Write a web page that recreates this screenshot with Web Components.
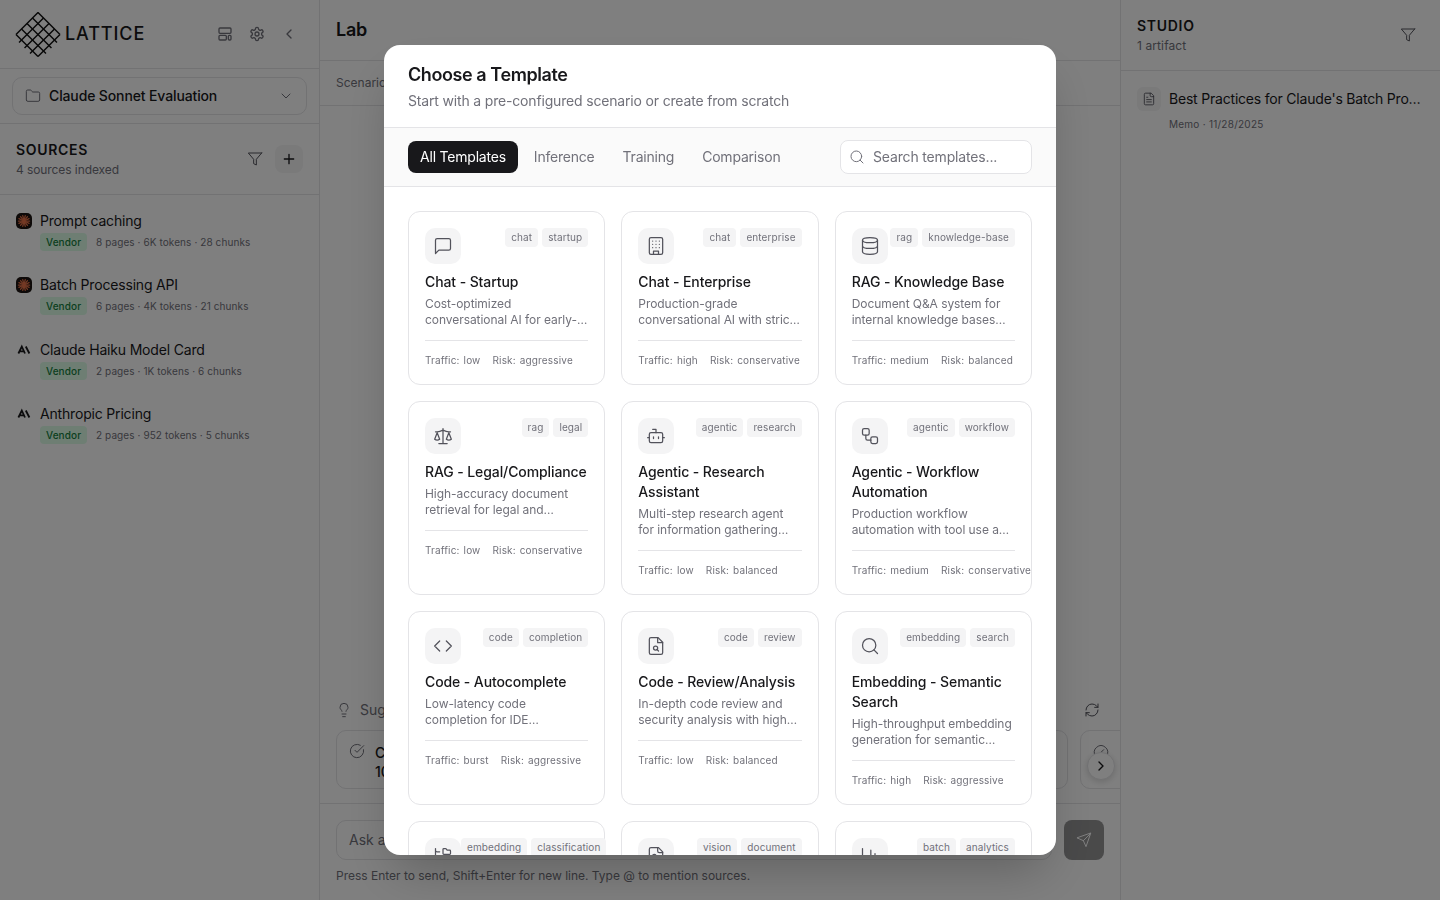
<!DOCTYPE html>
<html lang="en">
<head>
<meta charset="utf-8">
<title>Lattice</title>
<style>
html,body{margin:0;height:100%;background:#fff;color:#18181b;font-family:Inter,"Liberation Sans",sans-serif;overflow:hidden}
</style>
</head>
<body>
<app-shell></app-shell>
<script>
const P = {
 message:'<path d="M21 15a2 2 0 0 1-2 2H7l-4 4V5a2 2 0 0 1 2-2h14a2 2 0 0 1 2 2z"/>',
 building:'<rect x="4" y="2" width="16" height="20" rx="2"/><path d="M9 22v-4h6v4M8 6h.01M16 6h.01M12 6h.01M12 10h.01M12 14h.01M16 10h.01M16 14h.01M8 10h.01M8 14h.01"/>',
 database:'<ellipse cx="12" cy="5" rx="9" ry="3"/><path d="M3 5V19A9 3 0 0 0 21 19V5"/><path d="M3 12A9 3 0 0 0 21 12"/>',
 scale:'<path d="m16 16 3-8 3 8c-.87.65-1.92 1-3 1s-2.13-.35-3-1Z"/><path d="m2 16 3-8 3 8c-.87.65-1.92 1-3 1s-2.13-.35-3-1Z"/><path d="M7 21h10M12 3v18M3 7h2c2 0 5-1 7-2 2 1 5 2 7 2h2"/>',
 bot:'<path d="M12 8V4H8"/><rect width="16" height="12" x="4" y="8" rx="2"/><path d="M2 14h2M20 14h2M15 13v2M9 13v2"/>',
 workflow:'<rect width="8" height="8" x="3" y="3" rx="2"/><path d="M7 11v4a2 2 0 0 0 2 2h4"/><rect width="8" height="8" x="13" y="13" rx="2"/>',
 code:'<path d="m16 18 6-6-6-6M8 6l-6 6 6 6"/>',
 filesearch:'<path d="M14.5 2H6a2 2 0 0 0-2 2v16a2 2 0 0 0 2 2h12a2 2 0 0 0 2-2V7.5L14.5 2z"/><path d="M14 2v6h6"/><circle cx="11.5" cy="14.5" r="2.5"/><path d="M13.25 16.25 15 18"/>',
 search:'<circle cx="11" cy="11" r="8"/><path d="m21 21-4.3-4.3"/>',
 foldertree:'<path d="M20 10a1 1 0 0 0 1-1V6a1 1 0 0 0-1-1h-2.5a1 1 0 0 1-.8-.4l-.9-1.2A1 1 0 0 0 15 3h-2a1 1 0 0 0-1 1v5a1 1 0 0 0 1 1Z"/><path d="M20 21a1 1 0 0 0 1-1v-3a1 1 0 0 0-1-1h-2.9a1 1 0 0 1-.88-.55l-.42-.85a1 1 0 0 0-.92-.6H13a1 1 0 0 0-1 1v5a1 1 0 0 0 1 1Z"/><path d="M3 5a2 2 0 0 0 2 2h3M3 3v13a2 2 0 0 0 2 2h3"/>',
 fileimage:'<path d="M15 2H6a2 2 0 0 0-2 2v16a2 2 0 0 0 2 2h12a2 2 0 0 0 2-2V7Z"/><path d="M14 2v4a2 2 0 0 0 2 2h4"/><circle cx="10" cy="12" r="2"/><path d="m20 17-1.296-1.296a2.41 2.41 0 0 0-3.408 0L9 22"/>',
 barchart:'<path d="M3 3v18h18M18 17V9M13 17V5M8 17v-3"/>',
 bulb:'<path d="M15 14c.2-1 .7-1.7 1.5-2.5 1-.9 1.5-2.2 1.5-3.5A6 6 0 0 0 6 8c0 1 .2 2.2 1.5 3.5.7.7 1.3 1.5 1.5 2.5"/><path d="M9 18h6M10 22h4"/>',
 refresh:'<path d="M3 12a9 9 0 0 1 9-9 9.75 9.75 0 0 1 6.74 2.74L21 8"/><path d="M21 3v5h-5"/><path d="M21 12a9 9 0 0 1-9 9 9.75 9.75 0 0 1-6.74-2.74L3 16"/><path d="M8 16H3v5"/>',
 check:'<path d="M21.801 10A10 10 0 1 1 17 3.335"/><path d="m9 11 3 3L22 4"/>',
 gauge:'<path d="m12 14 4-4"/><path d="M3.34 19a10 10 0 1 1 17.32 0"/>',
 send:'<path d="m22 2-7 20-4-9-9-4Z"/><path d="M22 2 11 13"/>',
 filter:'<path d="M22 3H2l8 9.46V19l4 2v-8.54L22 3z"/>',
 folder:'<path d="M20 20a2 2 0 0 0 2-2V8a2 2 0 0 0-2-2h-7.9a2 2 0 0 1-1.69-.9L9.6 3.9A2 2 0 0 0 7.93 3H4a2 2 0 0 0-2 2v13a2 2 0 0 0 2 2Z"/>',
 settings:'<path d="M12.22 2h-.44a2 2 0 0 0-2 2v.18a2 2 0 0 1-1 1.73l-.43.25a2 2 0 0 1-2 0l-.15-.08a2 2 0 0 0-2.73.73l-.22.38a2 2 0 0 0 .73 2.73l.15.1a2 2 0 0 1 1 1.72v.51a2 2 0 0 1-1 1.74l-.15.09a2 2 0 0 0-.73 2.73l.22.38a2 2 0 0 0 2.73.73l.15-.08a2 2 0 0 1 2 0l.43.25a2 2 0 0 1 1 1.73V20a2 2 0 0 0 2 2h.44a2 2 0 0 0 2-2v-.18a2 2 0 0 1 1-1.73l.43-.25a2 2 0 0 1 2 0l.15.08a2 2 0 0 0 2.73-.73l.22-.39a2 2 0 0 0-.73-2.73l-.15-.08a2 2 0 0 1-1-1.74v-.5a2 2 0 0 1 1-1.74l.15-.09a2 2 0 0 0 .73-2.73l-.22-.38a2 2 0 0 0-2.73-.73l-.15.08a2 2 0 0 1-2 0l-.43-.25a2 2 0 0 1-1-1.73V4a2 2 0 0 0-2-2z"/><circle cx="12" cy="12" r="3"/>',
 filetext:'<path d="M15 2H6a2 2 0 0 0-2 2v16a2 2 0 0 0 2 2h12a2 2 0 0 0 2-2V7Z"/><path d="M14 2v4a2 2 0 0 0 2 2h4M10 9H8M16 13H8M16 17H8"/>',
 layout:'<rect x="3" y="3" width="18" height="8" rx="1.5"/><rect x="3" y="14" width="11" height="7" rx="1.5"/><rect x="17" y="14" width="4" height="7" rx="1.5"/>',
 left:'<path d="m15 18-6-6 6-6"/>',
 right:'<path d="m9 18 6-6-6-6"/>',
 down:'<path d="m6 9 6 6 6-6"/>',
 plus:'<path d="M5 12h14M12 5v14"/>'
};
const icon=(n,s=16,w=2,c='currentColor')=>`<svg xmlns="http://www.w3.org/2000/svg" width="${s}" height="${s}" viewBox="0 0 24 24" fill="none" stroke="${c}" stroke-width="${w}" stroke-linecap="round" stroke-linejoin="round" style="display:block;flex:none">${P[n]}</svg>`;

class LatticeLogo extends HTMLElement{
 constructor(){super();
  let lines='<path d="M0 0H31.11M0 0V31.11"/>';
  [7.78,15.56,23.33].forEach(v=>{lines+=`<path d="M${v} 0V34.6M0 ${v}H34.6"/>`});
  lines+='<path d="M31.11 0V31.11M0 31.11H31.11"/>';
  this.attachShadow({mode:'open'}).innerHTML=`<style>
  :host{display:flex;align-items:center;gap:5px}
  span{font:500 18px/22px Inter,sans-serif;letter-spacing:.05em;color:#18181b}
  svg{overflow:visible}
  </style>
  <svg width="44" height="44" viewBox="0 0 44 44" fill="none" stroke="#111" stroke-width="1.45" stroke-linecap="butt"><g transform="translate(22 .6) rotate(45)">${lines}</g></svg>
  <span>LATTICE</span>`;
 }
}
class SourceItem extends HTMLElement{
 constructor(){super();
  const k=this.getAttribute('logo');
  let rays='';
  for(let i=0;i<14;i++){const a=i*Math.PI/7;rays+=`<path d="M8 8L${(8+5.6*Math.cos(a)).toFixed(2)} ${(8+5.6*Math.sin(a)).toFixed(2)}"/>`}
  const logo=k==='burst'
   ?`<svg width="16" height="16" viewBox="0 0 16 16"><rect width="16" height="16" rx="5" fill="#1c1512"/><g stroke="#e8734a" stroke-width="1.25" stroke-linecap="round">${rays}</g></svg>`
   :`<svg width="16" height="16" viewBox="0 0 16 16" fill="none" stroke="#18181b" stroke-width="1.8"><path d="M2.4 11.5 5.8 4.5 9 11.5M3.6 9.4H8"/><path d="M9.8 4.5 13.4 11.5"/></svg>`;
  this.attachShadow({mode:'open'}).innerHTML=`<style>
  :host{display:grid;grid-template-columns:16px 1fr;column-gap:8px;height:64.33px;box-sizing:border-box;padding:0 16px;align-content:start}
  .l{height:20px;display:flex;align-items:center}
  .t{font:400 14px/20px Inter,sans-serif;letter-spacing:-.18px;color:#18181b;white-space:nowrap}
  .m{grid-column:2;display:flex;align-items:center;gap:9px;margin-top:2px;height:18px}
  .b{font:500 10px/18px Inter,sans-serif;letter-spacing:.1px;color:#15803d;background:#dcfce7;border-radius:4px;padding:0 6px;width:35px;box-sizing:content-box;text-align:center}
  .x{font:400 10px/18px Inter,sans-serif;letter-spacing:.09px;color:#71717a;white-space:nowrap}
  </style><div class="l">${logo}</div><div class="t"><slot></slot></div>
  <div class="m"><span class="b">Vendor</span><span class="x">${this.getAttribute('meta')}</span></div>`;
 }
}
class AppSidebar extends HTMLElement{
 constructor(){super();
  this.attachShadow({mode:'open'}).innerHTML=`<style>
  :host{display:flex;flex-direction:column;width:320px;flex:none;box-sizing:border-box;border-right:1px solid #e4e4e7;height:100vh;background:#fff}
  .top{height:69px;box-sizing:border-box;border-bottom:1px solid #e4e4e7;display:flex;align-items:center;padding:0 16px 0 16px;justify-content:space-between}
  .tools{display:flex;align-items:center;gap:16px;color:#71717a;padding-right:6px;margin-top:-1px}
  .proj{height:55px;box-sizing:border-box;border-bottom:1px solid #e4e4e7;padding:8px 12px}
  .sel{height:38px;box-sizing:border-box;border:1px solid #e4e4e7;border-radius:10px;display:flex;align-items:center;padding:0 12px;gap:8px;font:500 14px/20px Inter,sans-serif;letter-spacing:-.13px;color:#18181b}
  .sel span{flex:1}.sel svg{color:#71717a}
  .src{height:71px;box-sizing:border-box;border-bottom:1px solid #e4e4e7;display:flex;align-items:center;justify-content:space-between;padding:0 16px}
  h2{margin:0;font:600 14px/20px Inter,sans-serif;letter-spacing:.05em;color:#18181b}
  p{margin:0;font:400 12px/16px Inter,sans-serif;color:#71717a;letter-spacing:-.08px;margin-top:2px}
  .acts{display:flex;align-items:center;gap:12px;color:#52525b}
  .add{width:28px;height:28px;border-radius:8px;background:#f4f4f5;display:grid;place-items:center;color:#18181b}
  .list{padding-top:16px}
  </style>
  <div class="top"><lattice-logo></lattice-logo><div class="tools">${icon('layout',16)}${icon('settings',16)}${icon('left',16)}</div></div>
  <div class="proj"><div class="sel">${icon('folder',16,1.5)}<span>Claude Sonnet Evaluation</span>${icon('down',16,1.5)}</div></div>
  <div class="src"><div><h2>SOURCES</h2><p>4 sources indexed</p></div><div class="acts">${icon('filter',16,1.5)}<div class="add">${icon('plus',16)}</div></div></div>
  <div class="list"><slot></slot></div>`;
 }
}
class LabPanel extends HTMLElement{
 constructor(){super();
  this.attachShadow({mode:'open'}).innerHTML=`<style>
  :host{display:flex;flex-direction:column;flex:1;min-width:0;height:100vh;box-sizing:border-box;border-right:1px solid #e4e4e7;overflow:hidden;position:relative}
  .h{height:61px;box-sizing:border-box;border-bottom:1px solid #e4e4e7;display:flex;align-items:center;padding:0 16px;font:600 18px/28px Inter,sans-serif;letter-spacing:-.3px;color:#18181b;flex:none}
  .t{height:45px;box-sizing:border-box;border-bottom:1px solid #e4e4e7;display:flex;align-items:center;padding:0 16px;font:400 12px/16px Inter,sans-serif;color:#71717a;flex:none}
  .main{flex:1}
  .sug{height:104px;box-sizing:border-box;border-bottom:1px solid #e4e4e7;padding:0 0 0 16px;flex:none}
  .sh{height:20px;display:flex;align-items:center;gap:8px;padding-right:20px;font:400 14px/20px Inter,sans-serif;color:#71717a}
  .sh span{flex:1}
  .row{display:flex;gap:12px;margin-top:10px}
  .c{flex:none;height:59px;box-sizing:border-box;border:1px solid #e4e4e7;border-radius:10px;padding:12px;display:flex;gap:10px;font:500 14px/19px Inter,sans-serif;color:#18181b}
  .c svg{color:#71717a}
  .more{position:absolute;left:767px;top:752px;width:28px;height:28px;border-radius:50%;background:#fff;border:1px solid #e4e4e7;box-sizing:border-box;display:grid;place-items:center;box-shadow:0 2px 6px rgba(0,0,0,.15);color:#18181b}
  .inp{padding:16px 16px 0;flex:none;height:96px;box-sizing:border-box}
  .ir{display:flex;gap:12px}
  .f{flex:1;height:40px;box-sizing:border-box;border:1px solid #e4e4e7;border-radius:10px;padding:0 12px;display:flex;align-items:center;font:400 14px/20px Inter,sans-serif;color:#71717a}
  .go{width:40px;height:40px;border-radius:8px;background:#949495;display:grid;place-items:center;color:#fff}
  .hint{margin-top:8px;font:400 12px/16px Inter,sans-serif;letter-spacing:-.01px;color:#71717a}
  </style>
  <div class="h">Lab</div><div class="t">Scenarios</div><div class="main"></div>
  <div class="sug"><div class="sh">${icon('bulb',16,1.5)}<span>Suggestions</span>${icon('refresh',16,1.5,'#52525b')}</div>
   <div class="row"><div class="c" style="width:364px">${icon('check',16,1.5)}<div>Cost<br>10x</div></div><div class="c" style="width:356px"></div><div class="c" style="width:200px">${icon('gauge',16,1.5)}</div></div></div>
  <div class="more">${icon('right',16,2)}</div>
  <div class="inp"><div class="ir"><div class="f">Ask a question</div><div class="go">${icon('send',16,1.5)}</div></div><div class="hint">Press Enter to send, Shift+Enter for new line. Type @ to mention sources.</div></div>`;
 }
}
class StudioPanel extends HTMLElement{
 constructor(){super();
  this.attachShadow({mode:'open'}).innerHTML=`<style>
  :host{display:flex;flex-direction:column;width:319px;flex:none;height:100vh}
  .h{height:71px;box-sizing:border-box;border-bottom:1px solid #e4e4e7;display:flex;align-items:center;justify-content:space-between;padding:0 24px 0 16px;flex:none}
  h2{margin:0;font:600 14px/20px Inter,sans-serif;letter-spacing:.05em;color:#18181b}
  p{margin:2px 0 0;font:400 12px/16px Inter,sans-serif;letter-spacing:.1px;color:#71717a}
  .h svg{color:#52525b}
  .a{display:grid;grid-template-columns:24px 1fr;column-gap:8px;padding:16px 17px 0 16px}
  .i{width:24px;height:24px;border-radius:6px;background:#f4f4f5;display:grid;place-items:center;color:#52525b}
  .t{font:400 14px/24px Inter,sans-serif;letter-spacing:-.2px;color:#18181b;white-space:nowrap;overflow:hidden;text-overflow:ellipsis}
  .m{grid-column:2;margin-top:5px;font:400 10px/16px Inter,sans-serif;letter-spacing:.25px;color:#71717a}
  </style>
  <div class="h"><div><h2>STUDIO</h2><p>1 artifact</p></div>${icon('filter',16,1.5)}</div>
  <div class="a"><div class="i">${icon('filetext',14,1.5)}</div><div class="t">Best Practices for Claude's Batch Processing</div><div class="m">Memo · 11/28/2025</div></div>`;
 }
}
class TemplateCard extends HTMLElement{
 constructor(){super();
  const tags=(this.getAttribute('tags')||'').split(',').map(t=>`<span class="tag">${t}</span>`).join('');
  const tr=this.getAttribute('traffic');
  const foot=tr?`<div class="foot"><span><i>Traffic:</i> ${tr}</span><span><i>Risk:</i> ${this.getAttribute('risk')}</span></div>`:'';
  this.attachShadow({mode:'open'}).innerHTML=`<style>
  :host{display:block;box-sizing:border-box;border:1px solid #e4e4e7;border-radius:12px;padding:16px;background:#fff;min-width:0}
  .top{display:flex;justify-content:space-between;align-items:flex-start;margin-bottom:8px}
  .ic{width:36px;height:36px;border-radius:10px;background:#f4f4f5;display:grid;place-items:center;color:#52525b;flex:none}
  .tags{display:flex;gap:4px;flex:none}
  .tag{font:400 10px/19px Inter,sans-serif;letter-spacing:.1px;color:#71717a;background:#f4f4f5;border-radius:4px;padding:0 6px;white-space:nowrap}
  .ti{font:500 14px/20px Inter,sans-serif;letter-spacing:-.1px;color:#18181b}
  .de{margin-top:4px;font:400 12px/16px Inter,sans-serif;letter-spacing:-.06px;color:#71717a;display:-webkit-box;-webkit-line-clamp:2;-webkit-box-orient:vertical;overflow:hidden}
  .foot{margin-top:12px;border-top:1px solid #e4e4e7;padding-top:12px;display:flex;gap:12px;font:400 10px/15px Inter,sans-serif;letter-spacing:.16px;color:#71717a;white-space:nowrap}
  i{font-style:normal;color:#71717a;margin-right:1px}
  </style>
  <div class="top"><div class="ic">${icon(this.getAttribute('icon'),20,1.5)}</div><div class="tags">${tags}</div></div>
  ${tr?'<div class="ti"><slot name="title"></slot></div><div class="de"><slot></slot></div>':''}${foot}`;
 }
}
class TemplateModal extends HTMLElement{
 constructor(){super();
  this.attachShadow({mode:'open'}).innerHTML=`<style>
  :host{position:fixed;inset:0;background:rgba(0,0,0,.5);display:flex;align-items:center;justify-content:center;z-index:10}
  .m{width:672px;height:90vh;background:#fff;border-radius:16px;display:flex;flex-direction:column;overflow:hidden;box-shadow:0 25px 50px -12px rgba(0,0,0,.25)}
  .h{padding:16px 24px;border-bottom:1px solid #e4e4e7;flex:none}
  h1{margin:0;font:600 18px/28px Inter,sans-serif;letter-spacing:-.42px;color:#18181b}
  p{margin:2px 0 0;font:400 14px/20px Inter,sans-serif;letter-spacing:-.17px;color:#71717a}
  .bar{height:59px;box-sizing:border-box;border-bottom:1px solid #e4e4e7;background:#fafafa;display:flex;align-items:center;padding:0 24px;gap:4px;flex:none}
  .tab{height:32px;padding:0 12px;box-sizing:border-box;border-radius:8px;font:400 14px/32px Inter,sans-serif;letter-spacing:-.21px;color:#71717a}
  .tab.on{background:#18181b;color:#fff}
  .s{margin-left:auto;width:192px;height:34px;box-sizing:border-box;border:1px solid #e4e4e7;border-radius:8px;background:#fff;display:flex;align-items:center;gap:8px;padding:0 8px;font:400 14px/20px Inter,sans-serif;letter-spacing:-.16px;color:#71717a}
  .b{flex:1;min-height:0;overflow:hidden;padding:24px;box-sizing:border-box}
  .g{display:grid;grid-template-columns:repeat(3,1fr);gap:16px}
  </style>
  <div class="m"><div class="h"><h1>Choose a Template</h1><p>Start with a pre-configured scenario or create from scratch</p></div>
  <div class="bar"><span class="tab on">All Templates</span><span class="tab">Inference</span><span class="tab">Training</span><span class="tab">Comparison</span><div class="s">${icon('search',16,1.5)}<span>Search templates...</span></div></div>
  <div class="b"><div class="g"><slot></slot></div></div></div>`;
 }
}
class AppShell extends HTMLElement{
 constructor(){super();
  this.attachShadow({mode:'open'}).innerHTML=`<style>:host{display:flex;height:100vh;width:100vw;overflow:hidden}</style>
  <app-sidebar>
   <source-item logo="burst" meta="8 pages · 6K tokens · 28 chunks">Prompt caching</source-item>
   <source-item logo="burst" meta="6 pages · 4K tokens · 21 chunks">Batch Processing API</source-item>
   <source-item logo="a" meta="2 pages · 1K tokens · 6 chunks">Claude Haiku Model Card</source-item>
   <source-item logo="a" meta="2 pages · 952 tokens · 5 chunks">Anthropic Pricing</source-item>
  </app-sidebar>
  <lab-panel></lab-panel>
  <studio-panel></studio-panel>
  <template-modal>
   <template-card icon="message" tags="chat,startup" traffic="low" risk="aggressive"><span slot="title">Chat - Startup</span>Cost-optimized conversational AI for early-stage startups</template-card>
   <template-card icon="building" tags="chat,enterprise" traffic="high" risk="conservative"><span slot="title">Chat - Enterprise</span>Production-grade conversational AI with strict reliability needs</template-card>
   <template-card icon="database" tags="rag,knowledge-base" traffic="medium" risk="balanced"><span slot="title">RAG - Knowledge Base</span>Document Q&amp;A system for internal knowledge bases with citations</template-card>
   <template-card icon="scale" tags="rag,legal" traffic="low" risk="conservative"><span slot="title">RAG - Legal/Compliance</span>High-accuracy document retrieval for legal and compliance</template-card>
   <template-card icon="bot" tags="agentic,research" traffic="low" risk="balanced"><span slot="title">Agentic - Research Assistant</span>Multi-step research agent for information gathering tasks</template-card>
   <template-card icon="workflow" tags="agentic,workflow" traffic="medium" risk="conservative"><span slot="title">Agentic - Workflow Automation</span>Production workflow automation with tool use and retries</template-card>
   <template-card icon="code" tags="code,completion" traffic="burst" risk="aggressive"><span slot="title">Code - Autocomplete</span>Low-latency code completion for IDE integrations</template-card>
   <template-card icon="filesearch" tags="code,review" traffic="low" risk="balanced"><span slot="title">Code - Review/Analysis</span>In-depth code review and security analysis with high accuracy</template-card>
   <template-card icon="search" tags="embedding,search" traffic="high" risk="aggressive"><span slot="title">Embedding - Semantic Search</span>High-throughput embedding generation for semantic search</template-card>
   <template-card icon="foldertree" tags="embedding,classification"></template-card>
   <template-card icon="fileimage" tags="vision,document"></template-card>
   <template-card icon="barchart" tags="batch,analytics"></template-card>
  </template-modal>`;
 }
}
customElements.define('lattice-logo',LatticeLogo);
customElements.define('source-item',SourceItem);
customElements.define('app-sidebar',AppSidebar);
customElements.define('lab-panel',LabPanel);
customElements.define('studio-panel',StudioPanel);
customElements.define('template-card',TemplateCard);
customElements.define('template-modal',TemplateModal);
customElements.define('app-shell',AppShell);
</script>
</body>
</html>
